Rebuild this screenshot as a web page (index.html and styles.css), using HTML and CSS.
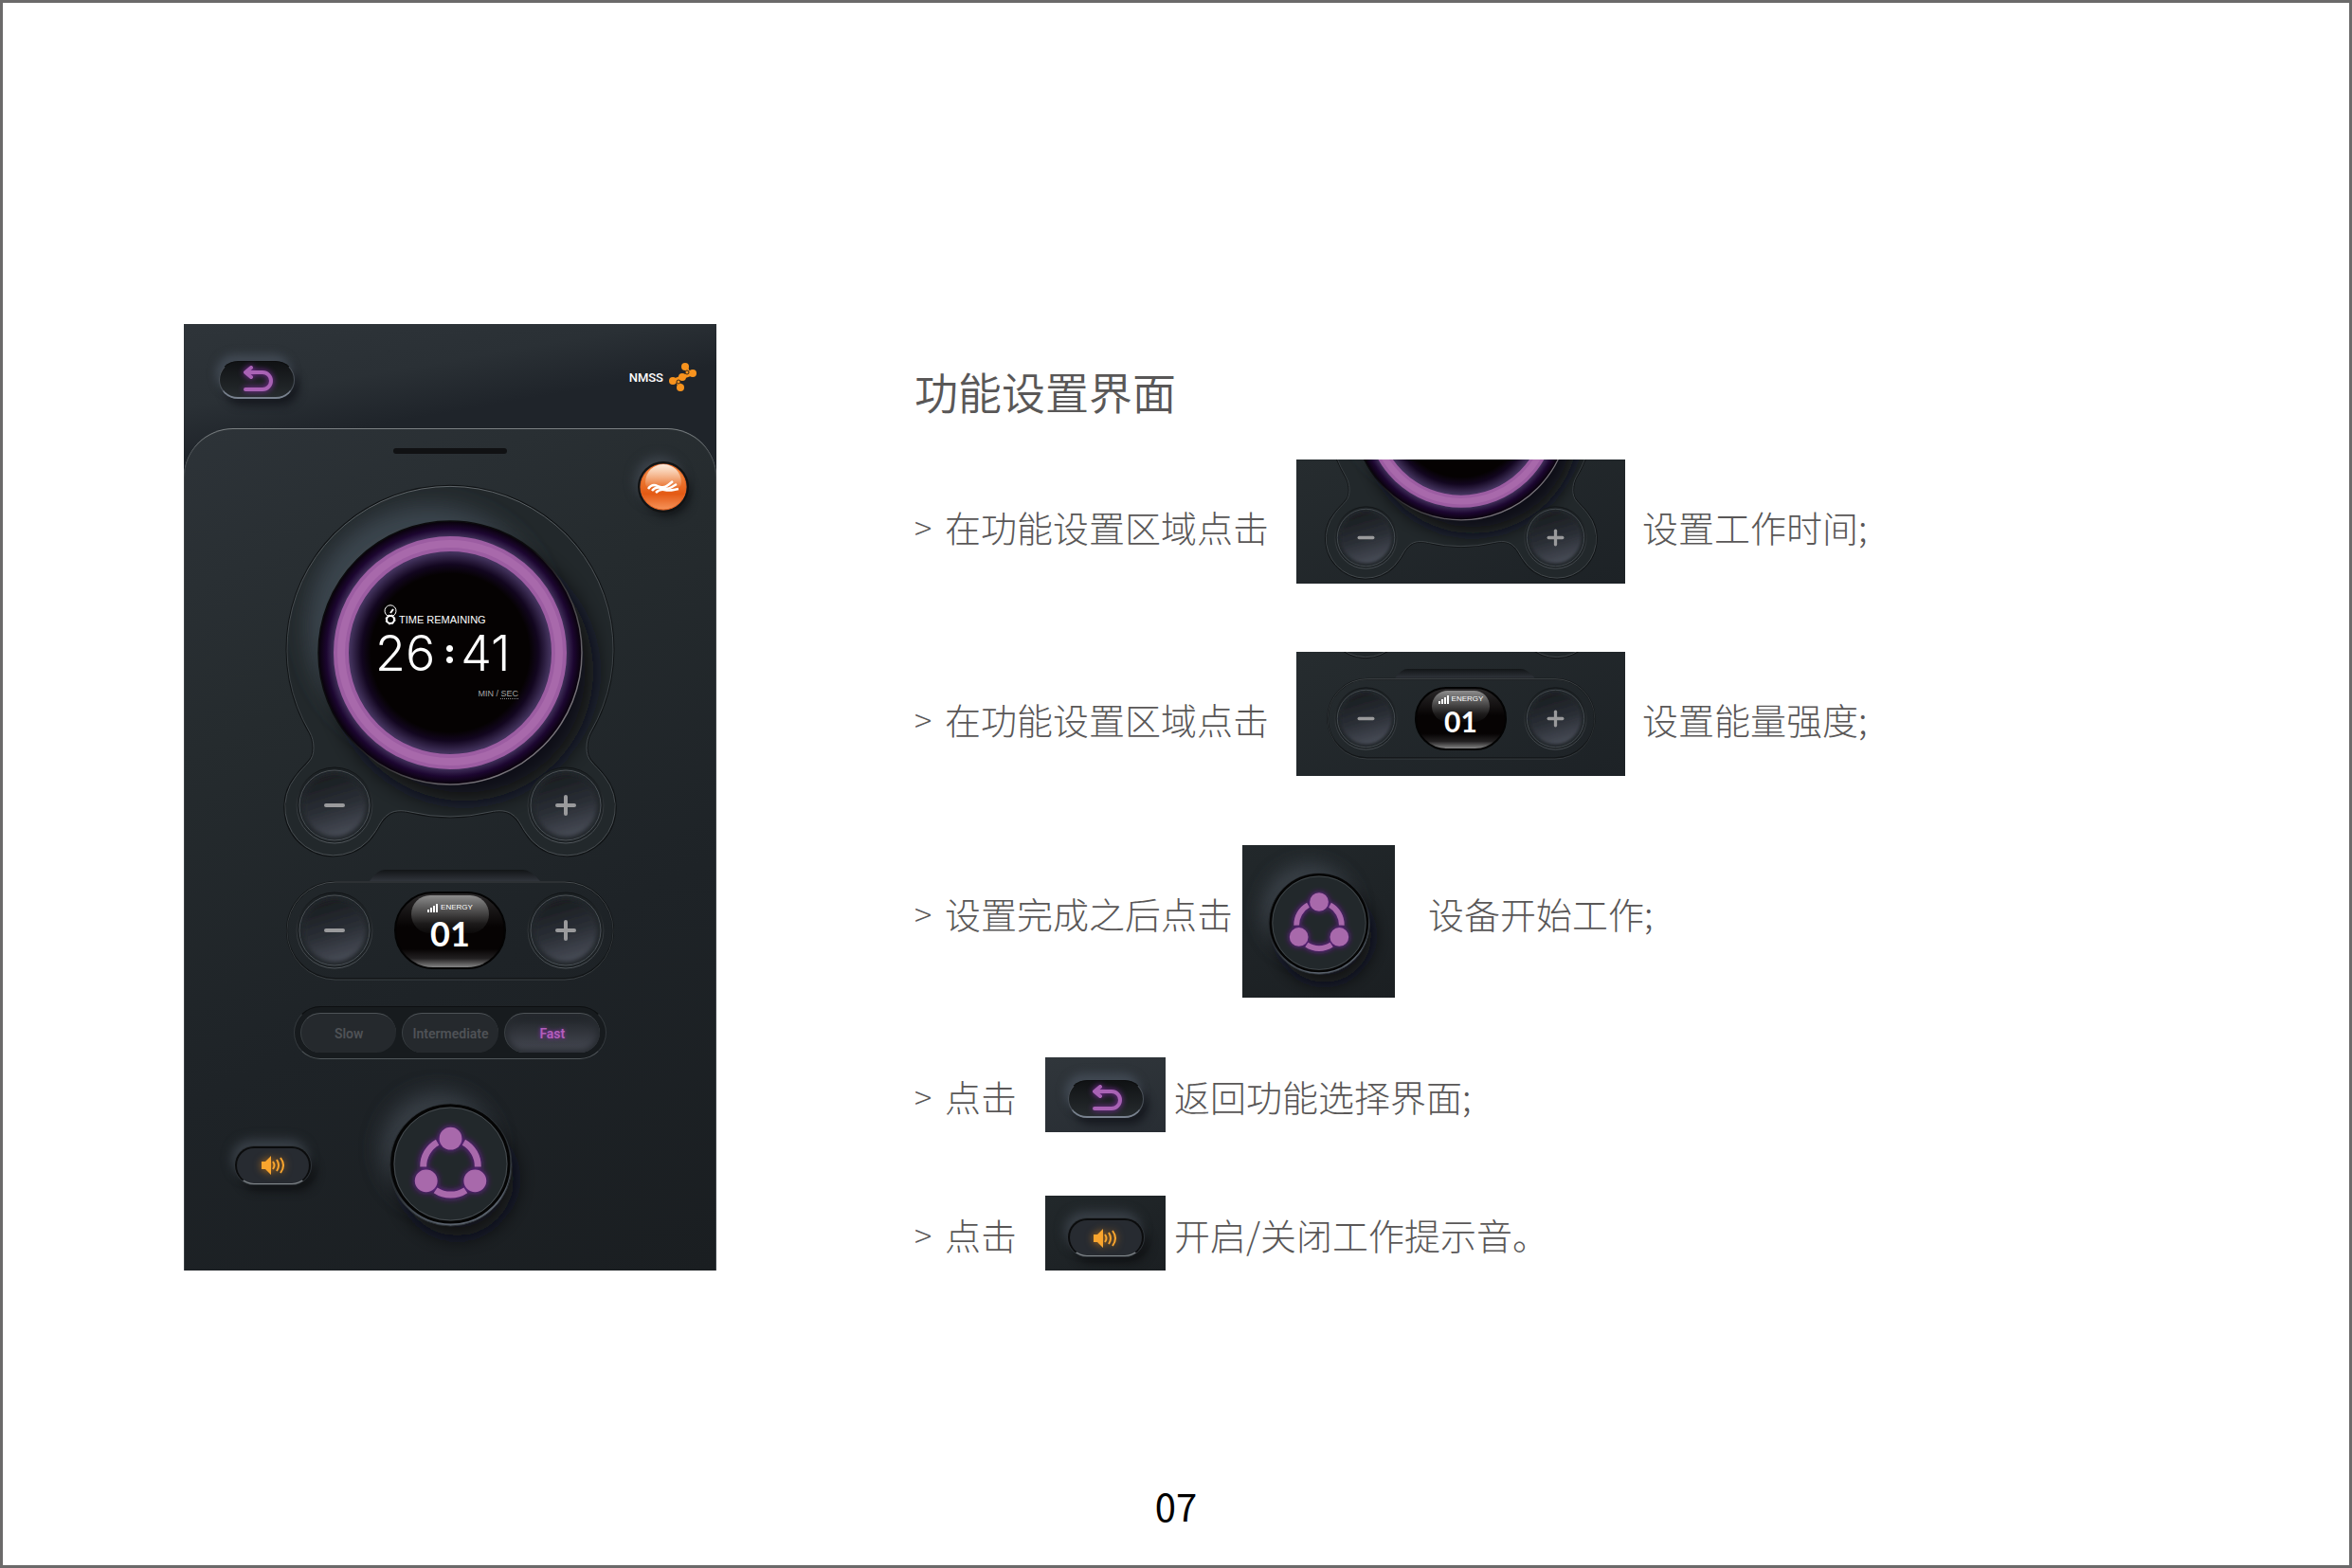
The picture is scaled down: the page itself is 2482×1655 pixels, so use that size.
FILE: index.html
```html
<!DOCTYPE html>
<html lang="zh-CN">
<head>
    <meta charset="UTF-8">
    <meta name="viewport" content="width=device-width, initial-scale=1.0">
    <title>功能设置界面</title>
    <link rel="stylesheet" href="styles.css">
</head>
<body>
    <!-- 公用图形 -->
    <svg class="defs" aria-hidden="true">
        <defs>
            <linearGradient id="line" x1="0" y1="0" x2="0" y2="1">
                <stop offset="0" stop-color="#60666a"/>
                <stop offset="0.5" stop-color="#3a4044"/>
                <stop offset="1" stop-color="#4a5054"/>
            </linearGradient>
            <linearGradient id="knobFace" x1="0.3" y1="0" x2="0.6" y2="1">
                <stop offset="0.1" stop-color="#1b1f23"/>
                <stop offset="0.55" stop-color="#2b2f36"/>
                <stop offset="1" stop-color="#484c57"/>
            </linearGradient>
            <linearGradient id="knobEdge" x1="0" y1="0" x2="0" y2="1">
                <stop offset="0" stop-color="#0f1214"/>
                <stop offset="1" stop-color="#50565b"/>
            </linearGradient>
            <linearGradient id="rim" x1="0" y1="0" x2="0.4" y2="1">
                <stop offset="0.5" stop-color="#171b1e"/>
                <stop offset="1" stop-color="#59616c"/>
            </linearGradient>
            <linearGradient id="dialEdge" x1="0" y1="0" x2="1" y2="1">
                <stop offset="0.45" stop-color="#0b0b0d"/>
                <stop offset="0.8" stop-color="#77737a"/>
            </linearGradient>
            <radialGradient id="dialGlow">
                <stop offset="0.6" stop-color="#050202"/>
                <stop offset="0.67" stop-color="#12061f"/>
                <stop offset="0.76" stop-color="#42325c"/>
                <stop offset="0.88" stop-color="#42325c"/>
                <stop offset="0.94" stop-color="#1c0630"/>
                <stop offset="1" stop-color="#070108"/>
            </radialGradient>
            <linearGradient id="notchFace" x1="0" y1="0" x2="0" y2="1">
                <stop offset="0" stop-color="#121517"/>
                <stop offset="1" stop-color="#30343b"/>
            </linearGradient>
            <linearGradient id="orangeFace" x1="0" y1="0" x2="0" y2="1">
                <stop offset="0" stop-color="#f39a55"/>
                <stop offset="0.65" stop-color="#e45a14"/>
                <stop offset="1" stop-color="#f6935a"/>
            </linearGradient>
            <linearGradient id="gloss" x1="0" y1="0" x2="0" y2="1">
                <stop offset="0" stop-color="#fff" stop-opacity="0.8"/>
                <stop offset="1" stop-color="#fff" stop-opacity="0.05"/>
            </linearGradient>
            <filter id="blur2" x="-50%" y="-50%" width="200%" height="200%"><feGaussianBlur stdDeviation="2"/></filter>
            <filter id="blur4" x="-50%" y="-50%" width="200%" height="200%"><feGaussianBlur stdDeviation="4"/></filter>
            <filter id="blur12" x="-50%" y="-50%" width="200%" height="200%"><feGaussianBlur stdDeviation="12"/></filter>

            <g id="knob">
                <circle cx="41" cy="41" r="40" fill="#1c2124" stroke="url(#knobEdge)"/>
                <circle cx="41" cy="41" r="37" fill="#22272b" stroke="#4d5358"/>
                <circle cx="41" cy="41" r="33" fill="url(#knobFace)" filter="url(#blur2)"/>
            </g>
            <g id="minus">
                <use href="#knob"/>
                <rect x="30" y="39" width="22" height="4" rx="2" fill="#9a9a9c"/>
            </g>
            <g id="plus">
                <use href="#knob"/>
                <rect x="30" y="39" width="22" height="4" rx="2" fill="#9a9a9c"/>
                <rect x="39" y="30" width="4" height="22" rx="2" fill="#9a9a9c"/>
            </g>

            <path id="plate" d="M25 258C30 267 31 282 24 289C20 294 15 298 10 305A51 51 0 1 0 93 364C98 357 100 350 107 345C113 340 122 340 131 342Q152 347 173 347Q194 347 215 342C224 340 233 340 239 345C246 350 248 357 253 364A51 51 0 1 0 336 305C331 298 326 294 322 289C315 282 316 267 321 258A172 172 0 1 0 25 258Z"/>
            <clipPath id="plateClip"><use href="#plate"/></clipPath>
            <g id="dial">
                <use href="#plate" fill="none" stroke="#101315" stroke-width="3"/>
                <g clip-path="url(#plateClip)">
                    <rect y="-2" width="346" height="390" fill="#22282b"/>
                    <circle cx="150" cy="146" r="128" fill="#3b444d" filter="url(#blur12)"/>
                    <circle cx="188" cy="194" r="136" fill="#0f1112" filter="url(#blur12)"/>
                </g>
                <use href="#plate" fill="none" stroke="url(#line)"/>
                <circle cx="173" cy="174" r="139" fill="url(#dialGlow)" stroke="url(#dialEdge)" stroke-width="1.5"/>
                <circle cx="173" cy="174" r="115" fill="none" stroke="#9c5da2" stroke-width="16"/>
                <circle cx="173" cy="174" r="115" fill="none" stroke="#a869ab" stroke-width="8"/>
            </g>

            <g id="tray">
                <path d="M88 12Q96 0 104 0H250Q258 0 268 12Z" fill="url(#notchFace)"/>
                <rect x="1" y="13" width="344" height="102" rx="51" fill="none" stroke="#121517" stroke-width="2"/>
                <rect x="1" y="13" width="344" height="103" rx="51" fill="none" stroke="url(#line)" opacity="0.7"/>
            </g>

            <g id="power">
                <circle cx="54" cy="50" r="60" fill="#3f464f" opacity="0.8" filter="url(#blur12)"/>
                <circle cx="74" cy="82" r="60" fill="#0f1112" filter="url(#blur12)"/>
                <circle cx="67" cy="67" r="65" fill="url(#rim)" stroke="#2b3034"/>
                <circle cx="67" cy="66" r="62" fill="#22282b" stroke="#050505" stroke-width="3"/>
                <circle cx="67" cy="66" r="60" fill="none" stroke="#60666a" opacity="0.6"/>
                <use href="#share" stroke="#7a1fa8" fill="#7a1fa8" filter="url(#blur4)"/>
                <use href="#share" stroke="#a869ab" fill="#a869ab"/>
            </g>
            <g id="share">
                <path d="M53 43A29 29 0 0 0 38 69M81 43A29 29 0 0 1 96 69M51 94A29 29 0 0 0 83 94" fill="none" stroke-width="7"/>
                <circle cx="67" cy="39" r="12" stroke="none"/>
                <circle cx="41" cy="84" r="12" stroke="none"/>
                <circle cx="93" cy="84" r="12" stroke="none"/>
            </g>

            <g id="back">
                <path d="M8 6H21A8 8 0 0 1 21 24H3M9 1L3 6L9 11" fill="none" stroke-width="4" stroke-linecap="round" stroke-linejoin="round"/>
            </g>
            <g id="speaker">
                <path d="M0 6H4L10 0V20L4 14H0Z" stroke="none"/>
                <path d="M12 6Q15 10 12 14M16 4Q20 10 16 16M20 2Q26 10 20 18" fill="none" stroke-width="2"/>
            </g>
        </defs>
    </svg>

    <div class="page">
        <main class="content">
            <section class="device">
                <header class="device-header">
                    <button class="pill pill-back" aria-label="返回">
                        <svg class="icon-back" viewBox="0 0 30 28"><use href="#back"/></svg>
                    </button>
                    <div class="brand">
                        <span>NMSS</span>
                        <svg class="brand-logo" viewBox="0 0 30 30">
                            <path d="M4 19L14 15L25 11M17 4L21 11M9 19L12 26" stroke="#f7931e" stroke-width="4" stroke-linecap="round"/>
                            <g fill="#f7931e">
                                <circle cx="17" cy="4" r="4"/>
                                <circle cx="25" cy="11" r="4"/>
                                <circle cx="14" cy="15" r="4"/>
                                <circle cx="4" cy="19" r="4"/>
                                <circle cx="12" cy="26" r="4"/>
                            </g>
                            <g fill="#f7931e" stroke="#3a2a18" stroke-width="1">
                                <circle cx="19" cy="10" r="2"/>
                                <circle cx="10" cy="20" r="2"/>
                            </g>
                        </svg>
                    </div>
                </header>

                <div class="panel">
                    <div class="handle"></div>
                    <button class="mode" aria-label="模式">
                        <svg viewBox="0 0 50 50">
                            <circle cx="25" cy="25" r="24" fill="url(#orangeFace)" stroke="#f0641e"/>
                            <path d="M6 20A19 19 0 0 1 44 20Q44 28 35 25Q25 22 15 25Q6 28 6 20Z" fill="url(#gloss)"/>
                            <g fill="none" stroke="#fff" stroke-width="2.5">
                                <path d="M9 27Q13 21 19 24T30 23L35 19"/>
                                <path d="M13 29Q17 24 23 26T34 25L39 22"/>
                                <path d="M17 31Q21 27 26 28T36 28L41 27"/>
                            </g>
                        </svg>
                    </button>

                    <div class="timer">
                        <svg class="timer-art" viewBox="0 0 346 386"><use href="#dial"/></svg>
                        <div class="display">
                            <div class="display-title">
                                <svg class="icon-gauge" viewBox="0 0 14 21" fill="none" stroke="#fff">
                                    <path d="M4 11A6 6 0 1 1 10 11"/>
                                    <path d="M7 8L10 4" stroke-width="2"/>
                                    <circle cx="7" cy="15" r="4" stroke-width="2"/>
                                    <circle cx="7" cy="15" r="5" stroke-dasharray="2 2"/>
                                </svg>
                                <span>TIME REMAINING</span>
                            </div>
                            <div class="clock"><span>26</span><i class="colon"></i><span>41</span></div>
                            <div class="display-unit">MIN / <span>SEC</span></div>
                        </div>
                        <div class="knobs">
                            <button class="knob" aria-label="减少时间"><svg viewBox="0 0 82 82"><use href="#minus"/></svg></button>
                            <button class="knob" aria-label="增加时间"><svg viewBox="0 0 82 82"><use href="#plus"/></svg></button>
                        </div>
                    </div>

                    <div class="energy">
                        <svg class="energy-art" viewBox="0 0 346 116"><use href="#tray"/></svg>
                        <button class="knob" aria-label="降低能量"><svg viewBox="0 0 82 82"><use href="#minus"/></svg></button>
                        <div class="readout">
                            <div class="readout-title">
                                <svg viewBox="0 0 12 9" fill="#fff"><path d="M0 6h2v3H0zM3 4h2v5H3zM6 2h2v7H6zM9 0h2v9H9z"/></svg>
                                <span>ENERGY</span>
                            </div>
                            <div class="readout-value">01</div>
                        </div>
                        <button class="knob" aria-label="提高能量"><svg viewBox="0 0 82 82"><use href="#plus"/></svg></button>
                    </div>

                    <div class="speeds">
                        <button class="speed">Slow</button>
                        <button class="speed">Intermediate</button>
                        <button class="speed speed-active">Fast</button>
                    </div>

                    <div class="device-footer">
                        <button class="pill pill-sound" aria-label="提示音">
                            <svg class="icon-speaker" viewBox="0 0 25 20"><use href="#speaker"/></svg>
                        </button>
                        <button class="power" aria-label="开始"><svg viewBox="0 0 134 134"><use href="#power"/></svg></button>
                    </div>
                </div>
            </section>

            <section class="guide">
                <h1>功能设置界面</h1>
                <ul class="steps">
                    <li class="step step-wide">
                        <span class="arrow">&gt;</span>
                        <span class="step-text">在功能设置区域点击</span>
                        <div class="shot shot-time">
                            <svg class="shot-art" viewBox="-39 235 423 160"><use href="#dial"/></svg>
                            <button class="knob knob-small" aria-label="减少时间"><svg viewBox="0 0 82 82"><use href="#minus"/></svg></button>
                            <button class="knob knob-small" aria-label="增加时间"><svg viewBox="0 0 82 82"><use href="#plus"/></svg></button>
                        </div>
                        <span class="step-text">设置工作时间;</span>
                    </li>
                    <li class="step step-wide">
                        <span class="arrow">&gt;</span>
                        <span class="step-text">在功能设置区域点击</span>
                        <div class="shot shot-energy">
                            <svg class="shot-art" viewBox="-39 381 423 160"><use href="#dial"/><use href="#tray" y="403"/></svg>
                            <button class="knob knob-small" aria-label="降低能量"><svg viewBox="0 0 82 82"><use href="#minus"/></svg></button>
                            <div class="readout readout-small">
                                <div class="readout-title">
                                    <svg viewBox="0 0 12 9" fill="#fff"><path d="M0 6h2v3H0zM3 4h2v5H3zM6 2h2v7H6zM9 0h2v9H9z"/></svg>
                                    <span>ENERGY</span>
                                </div>
                                <div class="readout-value">01</div>
                            </div>
                            <button class="knob knob-small" aria-label="提高能量"><svg viewBox="0 0 82 82"><use href="#plus"/></svg></button>
                        </div>
                        <span class="step-text">设置能量强度;</span>
                    </li>
                    <li class="step step-start">
                        <span class="arrow">&gt;</span>
                        <span class="step-text">设置完成之后点击</span>
                        <div class="shot shot-power">
                            <button class="power power-small" aria-label="开始"><svg viewBox="0 0 134 134"><use href="#power"/></svg></button>
                        </div>
                        <span class="step-text">设备开始工作;</span>
                    </li>
                    <li class="step step-key">
                        <span class="arrow">&gt;</span>
                        <span class="step-text">点击</span>
                        <div class="shot shot-key shot-light">
                            <button class="pill pill-back" aria-label="返回">
                                <svg class="icon-back" viewBox="0 0 30 28"><use href="#back"/></svg>
                            </button>
                        </div>
                        <span class="step-text">返回功能选择界面;</span>
                    </li>
                    <li class="step step-key">
                        <span class="arrow">&gt;</span>
                        <span class="step-text">点击</span>
                        <div class="shot shot-key">
                            <button class="pill pill-sound" aria-label="提示音">
                                <svg class="icon-speaker" viewBox="0 0 25 20"><use href="#speaker"/></svg>
                            </button>
                        </div>
                        <span class="step-text">开启/关闭工作提示音。</span>
                    </li>
                </ul>
            </section>
        </main>
        <footer class="page-number">07</footer>
    </div>
</body>
</html>
```
FILE: styles.css
```css
* {
    box-sizing: border-box;
}
body {
    margin: 0;
    background-color: #fff;
    color: #595757;
    font-family: "Noto Sans CJK SC", sans-serif;
}
button {
    padding: 0;
    border: none;
    background: none;
    cursor: pointer;
}
svg {
    display: block;
    overflow: visible;
}
.defs {
    position: absolute;
    width: 0;
    height: 0;
}
.page {
    display: flex;
    flex-direction: column;
    min-height: 100vh;
    border: 3px solid #6b6a6a;
}
.content {
    display: flex;
    align-items: flex-start;
    gap: 209px;
    padding: 339px 60px 0 191px;
}
.page-number {
    margin-top: auto;
    padding-bottom: 33px;
    color: #000;
    font-size: 40px;
    line-height: 60px;
    text-align: center;
}

/* 设备屏幕 */
.device {
    flex: none;
    width: 562px;
    background: linear-gradient(170deg, #2e3439 0%, #2a3035 8%, #1f242a 13%, #1f242a 100%);
    color: #fff;
    font-family: "Liberation Sans", sans-serif;
}
.device-header {
    display: flex;
    justify-content: space-between;
    align-items: flex-start;
    height: 110px;
    padding: 39px 20px 0 37px;
}
.brand {
    display: flex;
    align-items: center;
    gap: 6px;
    margin-top: 2px;
    font-family: Roboto, sans-serif;
    font-size: 13px;
    font-weight: 500;
}
.brand-logo {
    width: 30px;
    height: 30px;
}
.panel {
    position: relative;
    display: flex;
    flex-direction: column;
    align-items: center;
    padding: 20px 0 45px;
    border-top: 1px solid #7b8083;
    border-radius: 52px 52px 0 0;
    background: linear-gradient(155deg, #2d3338 0%, #252b2e 30%, #1e2327 62%, #1a1e21 100%);
    box-shadow: inset 1px 0 0 #3c4145, inset -1px 0 0 #3c4145;
}
.handle {
    width: 120px;
    height: 6px;
    border-radius: 3px;
    background-color: #101113;
}
.mode {
    position: absolute;
    top: 36px;
    right: 31px;
    width: 50px;
    height: 50px;
    border-radius: 50%;
    box-shadow: 0 0 0 2px #121212, -5px -7px 12px #3c434b, 4px 6px 10px #14171a;
}

/* 胶囊按钮 */
.pill {
    display: flex;
    align-items: center;
    justify-content: center;
    width: 80px;
    height: 40px;
    border-radius: 20px;
}
.pill-back {
    border: 1px solid #4a5058;
    border-top-color: #0c0d0e;
    border-bottom: 2px solid #79828f;
    background: linear-gradient(#101214, #262b2e);
    box-shadow: -3px -7px 10px #414953, 5px 7px 9px #171a20;
}
.pill-sound {
    border: 2px solid #0b0c0d;
    border-bottom: 1px solid #80868a;
    background-color: #272b31;
    box-shadow: 0 0 0 1px #2e3338, -3px -7px 12px #3a4149, 5px 7px 10px #111315;
}
.icon-back {
    width: 30px;
    height: 28px;
    stroke: #a862b4;
    filter: drop-shadow(0 0 3px #8a2cae);
}
.icon-speaker {
    width: 25px;
    height: 20px;
    fill: #f9a52e;
    stroke: #f9a52e;
    filter: drop-shadow(0 0 4px #b8721c);
}

/* 计时 */
.timer {
    position: relative;
    width: 346px;
    height: 386px;
    margin-top: 36px;
    padding-top: 34px;
}
.timer-art {
    position: absolute;
    top: 0;
    left: 0;
    width: 346px;
    height: 386px;
}
.display {
    position: relative;
    height: 280px;
    padding: 90px 0 0 94px;
}
.display-title {
    display: flex;
    align-items: flex-end;
    gap: 2px;
    padding-left: 9px;
    font-size: 11px;
    line-height: 12px;
}
.icon-gauge {
    width: 14px;
    height: 21px;
}
.clock {
    display: flex;
    align-items: center;
    margin-top: 4px;
    font-family: Inter, sans-serif;
    font-size: 52px;
    font-weight: 300;
    line-height: 52px;
}
.colon {
    width: 7px;
    height: 19px;
    margin: 0 8px 0 12px;
    background: radial-gradient(circle, #fff 3px, transparent 4px) 0 0 / 7px 7px no-repeat,
                radial-gradient(circle, #fff 3px, transparent 4px) 0 12px / 7px 7px no-repeat;
}
.display-unit {
    width: 151px;
    margin-top: 11px;
    color: #a5a5a5;
    font-size: 9px;
    line-height: 10px;
    text-align: right;
}
.display-unit span {
    border-bottom: 1px dotted #8a8a8a;
}
.knobs {
    position: relative;
    display: flex;
    justify-content: space-between;
    margin-top: -20px;
    padding: 0 10px;
}
.knob {
    width: 82px;
    height: 82px;
    border-radius: 50%;
}
.knob-small {
    width: 67px;
    height: 67px;
}

/* 能量 */
.energy {
    position: relative;
    display: flex;
    align-items: center;
    justify-content: space-between;
    width: 346px;
    height: 116px;
    margin-top: 17px;
    padding: 12px 10px 0;
}
.energy-art {
    position: absolute;
    top: 0;
    left: 0;
    width: 346px;
    height: 116px;
}
.energy .knob,
.shot .knob {
    position: relative;
}
.readout {
    position: relative;
    display: flex;
    flex-direction: column;
    align-items: center;
    width: 118px;
    height: 82px;
    padding-top: 10px;
    border: 2px solid #030303;
    border-radius: 41px;
    background: linear-gradient(#2a2829, #060303 45%, #060303 75%, #222021 88%, #858585);
    color: #fff;
}
.readout::before {
    content: "";
    position: absolute;
    top: 2px;
    left: 16px;
    right: 16px;
    height: 40px;
    border-radius: 20px;
    background: linear-gradient(#8c8c8c, #1c1a1a 75%, #0b0909);
}
.readout-title {
    position: relative;
    display: flex;
    align-items: center;
    gap: 2px;
    font-size: 8px;
    line-height: 10px;
}
.readout-title svg {
    width: 12px;
    height: 9px;
}
.readout-value {
    position: relative;
    font-family: Lato, sans-serif;
    font-size: 36px;
    font-weight: 700;
    line-height: 44px;
}

/* 速度 */
.speeds {
    display: grid;
    grid-template-columns: repeat(3, 1fr);
    gap: 6px;
    width: 330px;
    height: 56px;
    margin-top: 28px;
    padding: 6px;
    border: 1px solid #34393d;
    border-top-color: #0d0f11;
    border-bottom-color: #51575b;
    border-radius: 28px;
    background-color: #171b1e;
}
.speed {
    border-top: 1px solid #4e5357;
    border-left: 1px solid #3b4044;
    border-radius: 21px;
    background-color: #25292d;
    color: #4f5256;
    font-family: Roboto, sans-serif;
    font-size: 14px;
    font-weight: 600;
}
.speed-active {
    background: linear-gradient(#1e2226, #474a54);
    box-shadow: inset 0 0 6px 3px #272b30;
    color: #b35fbb;
    text-shadow: 0 0 4px #8a2cae;
}
.device-footer {
    display: grid;
    grid-template-columns: 1fr auto 1fr;
    align-items: center;
    align-self: stretch;
    margin-top: 45px;
    padding-left: 1px;
}
.device-footer .pill {
    margin-left: 53px;
}
.power {
    width: 133px;
    height: 133px;
    border-radius: 50%;
}
.power-small {
    width: 110px;
    height: 110px;
}

/* 说明 */
.guide {
    padding-top: 36px;
}
h1 {
    margin: 0;
    font-size: 46px;
    font-weight: 350;
    line-height: 68px;
}
.steps {
    margin: 0;
    padding: 0;
    list-style: none;
}
.step {
    display: flex;
    align-items: center;
    font-size: 38px;
    font-weight: 300;
    line-height: 56px;
    white-space: nowrap;
}
.arrow {
    width: 32px;
    font-size: 34px;
}
.step-wide {
    margin-top: 72px;
}
.step-wide:first-child {
    margin-top: 39px;
}
.step-wide > span {
    padding-top: 10px;
}
.step-wide .shot {
    margin: 0 18px 0 29px;
}
.step-start {
    margin-top: 73px;
}
.step-start > span {
    padding-bottom: 18px;
}
.step-start .shot {
    margin: 0 35px 0 10px;
}
.step-key {
    margin-top: 63px;
}
.step-key + .step-key {
    margin-top: 67px;
}
.step-key > span {
    padding-top: 3px;
}
.step-key .shot {
    margin: 0 9px 0 30px;
}

/* 局部截图 */
.shot {
    position: relative;
    display: flex;
    align-items: center;
    justify-content: center;
    overflow: hidden;
    background: linear-gradient(155deg, #22282b, #1b1f22);
    font-family: "Liberation Sans", sans-serif;
    font-weight: 400;
}
.shot-time,
.shot-energy {
    justify-content: space-between;
    width: 347px;
    height: 131px;
    padding: 0 40px;
    background: linear-gradient(155deg, #262c2f, #1d2226);
}
.shot-time {
    padding-top: 33px;
}
.shot-energy {
    padding-top: 10px;
}
.shot-art {
    position: absolute;
    top: 0;
    left: 0;
    width: 347px;
    height: 131px;
}
.readout-small {
    width: 97px;
    height: 67px;
    padding-top: 6px;
}
.readout-small::before {
    height: 33px;
}
.readout-small .readout-value {
    font-size: 30px;
    line-height: 36px;
}
.shot-power {
    width: 161px;
    height: 161px;
    padding-top: 4px;
}
.shot-key {
    width: 127px;
    height: 79px;
    padding-top: 9px;
}
.shot-light {
    background: linear-gradient(165deg, #30363b, #282d33);
}
```
